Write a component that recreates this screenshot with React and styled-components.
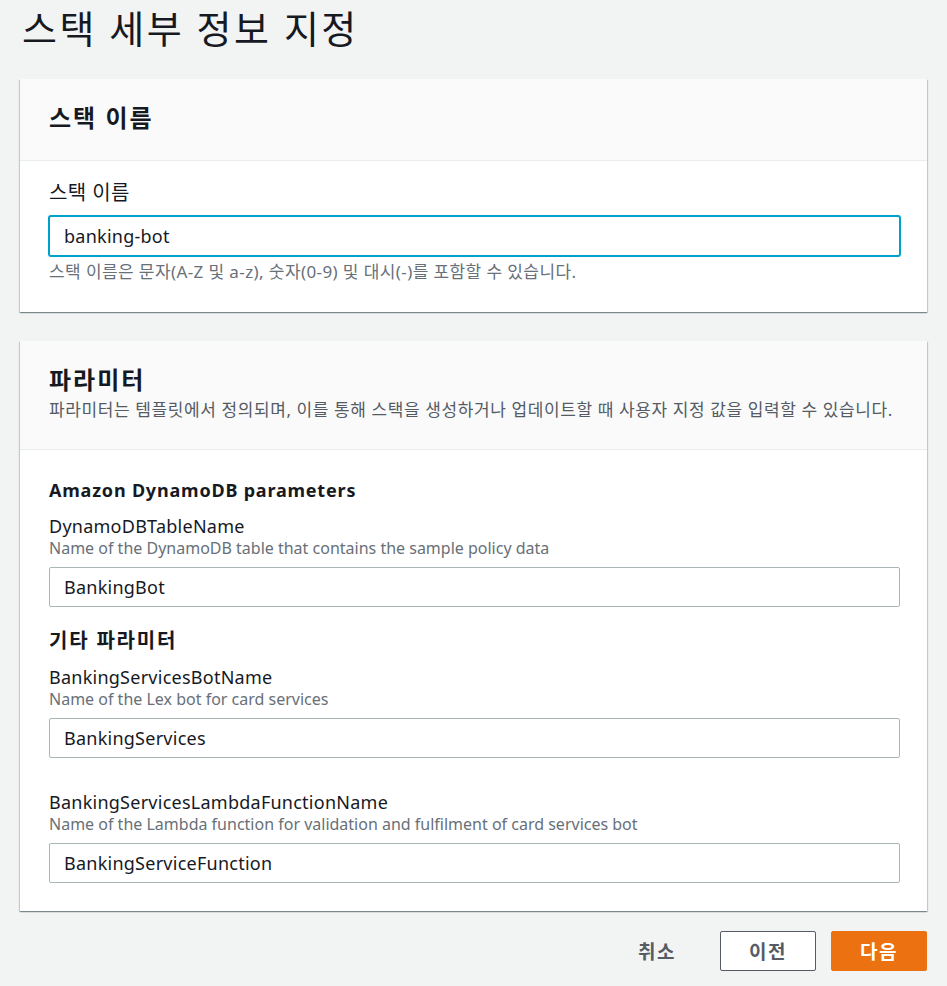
import React from "react";
import styled, { createGlobalStyle } from "styled-components";

const GlobalStyle = createGlobalStyle`
  body {
    margin: 0;
    background: #f2f3f3;
    font-family: "Noto Sans", "Noto Sans CJK KR", sans-serif;
    color: #16191f;
  }
`;

const Page = styled.div`
  padding: 6px 20px 15px 20px;
`;

const Title = styled.h1`
  margin: 0 0 29px 2px;
  font-size: 38px;
  line-height: 44px;
  font-weight: 400;
  letter-spacing: 2.5px;
`;

const Card = styled.section`
  background: #fff;
  margin-bottom: ${(p) => p.gap || 0}px;
  box-shadow: 0 1px 1px 0 rgba(0, 28, 36, 0.3), 1px 1px 1px 0 rgba(0, 28, 36, 0.15),
    -1px 1px 1px 0 rgba(0, 28, 36, 0.15);
`;

const CardHeader = styled.header`
  background: #fafafa;
  border-bottom: 1px solid #eaeded;
  padding: 24px 28px ${(p) => p.bottom}px 29px;
`;

const CardTitle = styled.h2`
  margin: 0;
  font-size: 24px;
  line-height: 30px;
  font-weight: 700;
  letter-spacing: 2px;
`;

const CardDesc = styled.p`
  margin: 5px 0 0;
  font-size: 17px;
  line-height: 20px;
  letter-spacing: 0.6px;
  color: #545b64;
`;

const CardBody = styled.div`
  padding: ${(p) => p.top}px 27px ${(p) => p.bottom}px 29px;
`;

const GroupTitle = styled.h3`
  margin: ${(p) => p.top || 0}px 0 12px;
  font-size: ${(p) => (p.ko ? 20 : 18)}px;
  line-height: 26px;
  font-weight: 700;
  letter-spacing: ${(p) => (p.ko ? 1.8 : 0.8)}px;
`;

const Field = styled.div`
  margin-top: ${(p) => p.top || 0}px;
`;

const Label = styled.label`
  display: block;
  font-size: ${(p) => (p.ko ? 20 : 18)}px;
  line-height: 22px;
  letter-spacing: ${(p) => (p.ko ? 0.4 : 0.25)}px;
`;

const Desc = styled.div`
  margin-top: 1px;
  font-size: 16px;
  line-height: 20px;
  color: #687078;
`;

const Input = styled.input`
  display: block;
  box-sizing: border-box;
  width: 100%;
  height: 40px;
  margin-top: ${(p) => p.top}px;
  padding: 0 14px;
  border: 1px solid ${(p) => (p.focused ? "#00a1c9" : "#aab7b8")};
  box-shadow: ${(p) => (p.focused ? "0 0 0 1px #00a1c9" : "none")};
  border-radius: 2px;
  font-family: inherit;
  font-size: 18px;
  letter-spacing: 0.25px;
  color: #16191f;
  background: #fff;
  outline: none;
`;

const Help = styled.div`
  margin-top: 6px;
  font-size: 17px;
  line-height: 20px;
  letter-spacing: 0.4px;
  color: #687078;
`;

const Actions = styled.div`
  display: flex;
  justify-content: flex-end;
  align-items: center;
  gap: 15px;
  margin-top: 20px;
`;

const Button = styled.button`
  box-sizing: border-box;
  height: 40px;
  min-width: 96px;
  padding: 0 20px;
  border-radius: 2px;
  font-family: inherit;
  font-size: 19px;
  font-weight: 700;
  letter-spacing: 1.5px;
  cursor: pointer;
  border: 1px solid ${(p) => (p.variant === "primary" ? "#ec7211" : p.variant === "link" ? "transparent" : "#545b64")};
  background: ${(p) => (p.variant === "primary" ? "#ec7211" : p.variant === "link" ? "transparent" : "#fff")};
  color: ${(p) => (p.variant === "primary" ? "#fff" : "#545b64")};
`;

export default function App() {
  return (
    <Page>
      <GlobalStyle />
      <Title>스택 세부 정보 지정</Title>

      <Card gap={29}>
        <CardHeader bottom={27}>
          <CardTitle>스택 이름</CardTitle>
        </CardHeader>
        <CardBody top={21} bottom={30}>
          <Label ko>스택 이름</Label>
          <Input top={12} focused defaultValue="banking-bot" />
          <Help>스택 이름은 문자(A-Z 및 a-z), 숫자(0-9) 및 대시(-)를 포함할 수 있습니다.</Help>
        </CardBody>
      </Card>

      <Card>
        <CardHeader bottom={29}>
          <CardTitle>파라미터</CardTitle>
          <CardDesc>
            파라미터는 템플릿에서 정의되며, 이를 통해 스택을 생성하거나 업데이트할 때 사용자 지정 값을 입력할 수 있습니다.
          </CardDesc>
        </CardHeader>
        <CardBody top={27} bottom={28}>
          <GroupTitle>Amazon DynamoDB parameters</GroupTitle>
          <Field>
            <Label>DynamoDBTableName</Label>
            <Desc>Name of the DynamoDB table that contains the sample policy data</Desc>
            <Input top={9} defaultValue="BankingBot" />
          </Field>

          <GroupTitle ko top={21}>기타 파라미터</GroupTitle>
          <Field>
            <Label>BankingServicesBotName</Label>
            <Desc>Name of the Lex bot for card services</Desc>
            <Input top={9} defaultValue="BankingServices" />
          </Field>
          <Field top={33}>
            <Label>BankingServicesLambdaFunctionName</Label>
            <Desc>Name of the Lambda function for validation and fulfilment of card services bot</Desc>
            <Input top={9} defaultValue="BankingServiceFunction" />
          </Field>
        </CardBody>
      </Card>

      <Actions>
        <Button variant="link">취소</Button>
        <Button>이전</Button>
        <Button variant="primary">다음</Button>
      </Actions>
    </Page>
  );
}
